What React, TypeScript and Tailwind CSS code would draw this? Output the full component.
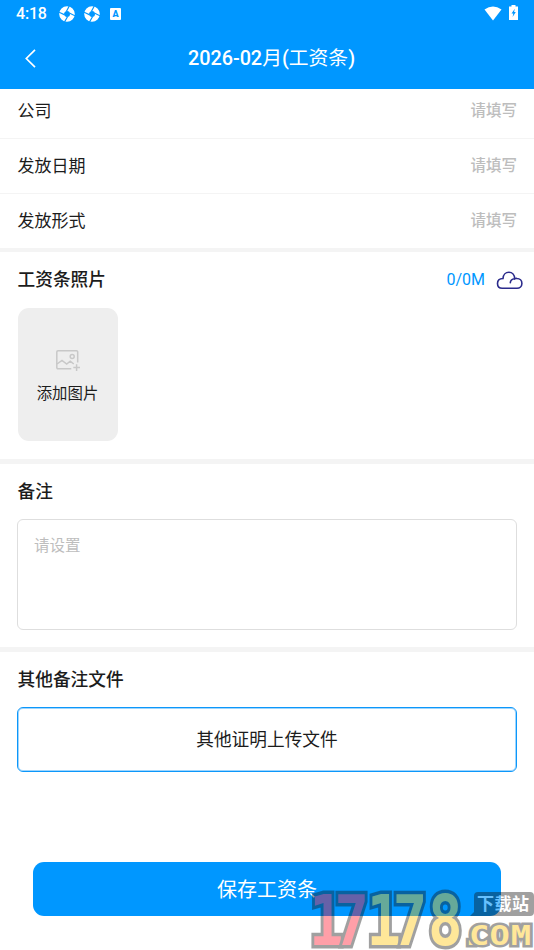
const FONT = 'font-[Roboto,"Noto_Sans_CJK_SC",sans-serif]';

const fields = [
  { label: "公司", height: "h-[50px] pb-[3px]" },
  { label: "发放日期", height: "h-[55px] pt-px" },
  { label: "发放形式", height: "h-[54px] pt-px" },
];

function SyncIcon() {
  return (
    <svg width="16" height="16" viewBox="0 0 16 16">
      <circle cx="8" cy="8" r="5.4" fill="none" stroke="#fff" strokeWidth="4.8" />
      <path d="M7.500 5.200 10.300 0M10.800 7.200 16 9.800M8.500 10.800 5.500 16M5.200 8.600 0 6.200" stroke="#0097ff" strokeWidth="1.2" />
    </svg>
  );
}

function StatusBar() {
  return (
    <div className="flex h-7 items-center justify-between px-4 text-white">
      <div className="flex items-center">
        <span className="w-[43px] text-[16px] font-medium leading-7 tracking-[-0.2px]">4:18</span>
        <SyncIcon />
        <span className="w-[9px]" />
        <SyncIcon />
        <span className="ml-[10px] flex h-3 w-[11px] items-center justify-center rounded-[1px] bg-white text-[9px] font-black leading-none text-[#0097ff]">
          A
        </span>
      </div>
      <div className="flex items-start gap-[7px] pb-[3px]">
        <svg className="mt-[1px]" width="18" height="15" viewBox="0 0 18 15" fill="#fff">
          <path d="M.5 3.500Q9-2.500 17.500 3.500L9 14.500Z" />
        </svg>
        <svg width="9" height="15" viewBox="0 0 9 15">
          <path d="M2.500 0h4v1.500H9V15H0V1.500h2.500z" fill="#fff" />
          <path d="M5.800 3.700 2.500 8.400h1.800l-.7 3.700 3.200-5H5.100l.7-3.400z" fill="#0097ff" />
        </svg>
      </div>
    </div>
  );
}

function CloudIcon() {
  return (
    <svg width="27" height="19" viewBox="0 0 27 19" fill="none" stroke="#2b2b8c" strokeWidth="1.6" strokeLinecap="round">
      <path d="M6.200 17.300H21A4.900 4.900 0 0 0 21 7.500C20.200 7.300 19.400 7.400 18.700 7.700 18.600 4 16.200 1.300 12.900 1.300S7.200 4 7 7.500C3.500 7.600 1.500 9.600 1.500 12.500S3.500 17.300 6.200 17.300Z" />
      <path d="M18.700 7.700C16 8 14.400 9.300 14.300 11.800" />
    </svg>
  );
}

function AddImageIcon() {
  return (
    <svg width="24" height="21" viewBox="0 0 24 21" fill="none" stroke="#c8c8c8" strokeWidth="1.5">
      <path d="M15.300 18.800H2a1.200 1.200 0 0 1-1.200-1.200V2A1.200 1.200 0 0 1 2 .8h18.500A1.200 1.200 0 0 1 21.700 2v10.500" />
      <circle cx="16.200" cy="6.600" r="2" />
      <path d="m1 14 5-3.600 4.700 3.600 3.500-2.800 3.600 2.800M17.300 17.600h6.700M20.600 14.300v6.600" />
    </svg>
  );
}

function Watermark() {
  return (
    <svg
      className="absolute bottom-0 right-0 opacity-40"
      width="224"
      height="62"
      viewBox="0 0 224 62"
      fontFamily="DejaVu Sans Mono, monospace"
      fontWeight="bold"
      stroke="#151515"
      paintOrder="stroke"
    >
      <path d="M168 4h52q4 0 4 4v16q0 4-4 4h-60l4-4V8q0-4 4-4z" fill="#151515" stroke="none" />
      <text x="167" y="22" fontSize="17" fontFamily="Noto Sans CJK SC, sans-serif" textLength="52" fill="#fff" stroke="none">
        下载站
      </text>
      <text transform="translate(-1 57) scale(.82 1)" x="0 31 70 102 145" fontSize="70" strokeWidth="7" fill="#ffc503">
        <tspan fill="#ff1228">17</tspan>178
      </text>
      <text transform="translate(154 57) scale(1.25 .98)" x="-2 4 20.500 37.500" fontSize="27" strokeWidth="5" fill="#ffc503" className="uppercase">
        .com
      </text>
    </svg>
  );
}

export default function App() {
  return (
    <div className={`${FONT} relative h-[950px] w-[534px] overflow-hidden bg-white text-[#1c1c1c]`}>
      <header className="h-[89px] bg-[#0097ff] text-white">
        <StatusBar />
        <div className="grid h-[61px] grid-cols-[60px_1fr_60px] items-center">
          <svg className="ml-[25px]" width="11" height="19" viewBox="0 0 11 19" fill="none" stroke="#fff" strokeWidth="1.7">
            <path d="m10 .8-8.700 8.700L10 18.200" />
          </svg>
          <h1 className="pl-[9px] pt-px text-center text-[19.8px] font-medium leading-[30px]">
            2026-02<span className="font-normal">月</span>(<span className="font-normal">工资条</span>)
          </h1>
        </div>
      </header>

      <section>
        {fields.map(({ label, height }) => (
          <div key={label} className={`${height} flex items-center justify-between border-b border-[#f4f4f4] px-[17px] last:border-0`}>
            <span className="pl-[0.5px] text-[17px]">{label}</span>
            <span className="text-[15.5px] font-medium text-[#bdbdbd]">请填写</span>
          </div>
        ))}
      </section>

      <section className="h-[211px] border-t-4 border-[#f4f4f4] px-[17px]">
        <div className="-mr-3 flex h-14 items-center">
          <h2 className="flex-1 pl-[0.5px] text-[17.7px] font-medium">工资条照片</h2>
          <span className="mr-[11px] text-[16px] text-[#0097ff]">0/0M</span>
          <span className="mr-[6px]"><CloudIcon /></span>
        </div>
        <button className="ml-px flex h-[133px] w-[100px] flex-col items-center rounded-[11px] bg-[#eee] pr-px pt-[42px]">
          <AddImageIcon />
          <span className="mt-3 text-[15.4px] leading-[22px]">添加图片</span>
        </button>
      </section>

      <section className="h-[188px] border-t-[5px] border-[#f4f4f4] px-[17px]">
        <h2 className="flex h-[55px] items-center pl-[0.5px] pt-[2px] text-[17.7px] font-medium">备注</h2>
        <div className="h-[111px] rounded-[6px] border border-[#dedede] px-4 pt-[14px] text-[15.5px] leading-6 text-[#bdbdbd]">
          请设置
        </div>
      </section>

      <section className="h-[215px] border-t-[5px] border-[#f4f4f4] px-[17px]">
        <h2 className="flex h-[55px] items-center pl-[0.5px] pt-px text-[17.7px] font-medium">其他备注文件</h2>
        <button className="h-[65px] w-full rounded-[6px] border border-[#0c97fa] pt-px text-[17.7px] ring-1 ring-inset ring-[#0c97fa]/40">
          其他证明上传文件
        </button>
      </section>

      <button className="mx-[33px] h-[54px] w-[468px] rounded-[11px] bg-[#0097ff] pt-px text-[20px] text-white">保存工资条</button>

      <Watermark />
    </div>
  );
}
